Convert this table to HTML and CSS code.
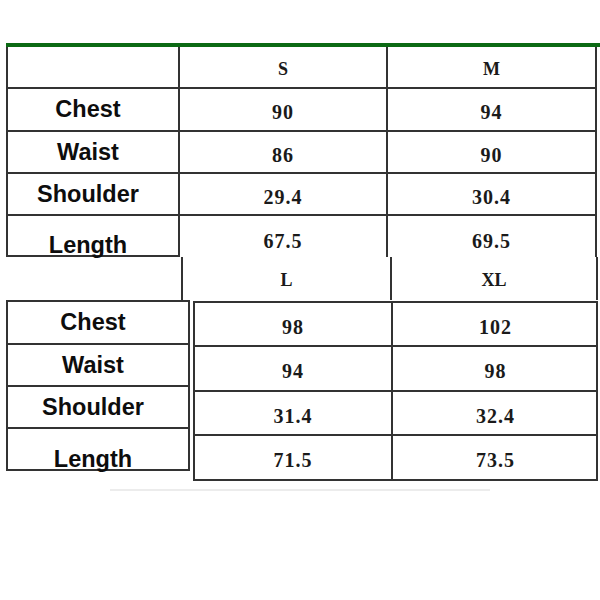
FILE: index.html
```html
<!DOCTYPE html>
<html>
<head>
<meta charset="utf-8">
<link rel="stylesheet" href="styles.css">
</head>
<body>
<div class="sheet">
  <div class="green"></div>
  <div class="grid-top">
    <div class="cell lab first"></div>
    <div class="cell val hd">S</div>
    <div class="cell val hd">M</div>

    <div class="cell lab first">Chest</div>
    <div class="cell val">90</div>
    <div class="cell val">94</div>

    <div class="cell lab first">Waist</div>
    <div class="cell val">86</div>
    <div class="cell val">90</div>

    <div class="cell lab first">Shoulder</div>
    <div class="cell val">29.4</div>
    <div class="cell val">30.4</div>

    <div class="cell lab first last low">Length</div>
    <div class="cell val nob low2">67.5</div>
    <div class="cell val nob low2">69.5</div>
  </div>

  <div class="head-bottom">
    <div class="hcell blank"></div>
    <div class="hcell val hd">L</div>
    <div class="hcell val hd">XL</div>
  </div>

  <div class="body-bottom">
    <div class="labels">
      <div class="lrow lab">Chest</div>
      <div class="lrow lab">Waist</div>
      <div class="lrow lab">Shoulder</div>
      <div class="lrow lab low">Length</div>
    </div>
    <div class="values">
      <div class="vcell val">98</div>
      <div class="vcell val">102</div>
      <div class="vcell val">94</div>
      <div class="vcell val">98</div>
      <div class="vcell val">31.4</div>
      <div class="vcell val">32.4</div>
      <div class="vcell val">71.5</div>
      <div class="vcell val">73.5</div>
    </div>
  </div>
  <div class="faint"></div>
</div>
</body>
</html>
```
FILE: styles.css
```css
html, body {
  margin: 0;
  padding: 0;
  background: #ffffff;
}

.sheet {
  width: 600px;
  height: 600px;
  padding-top: 43px;
  box-sizing: border-box;
}

.green {
  margin-left: 6px;
  width: 594px;
  height: 4px;
  background: #0c6a14;
}

.grid-top {
  margin-left: 6px;
  display: grid;
  grid-template-columns: 174px 208px 209px;
  grid-template-rows: 42px 43px 42px 42px 41px;
}

.cell {
  box-sizing: border-box;
  border-right: 2px solid #333;
  border-bottom: 2px solid #333;
  display: flex;
  align-items: center;
  justify-content: center;
}

.cell.first {
  border-left: 2px solid #333;
}

.cell.nob {
  border-bottom: none;
}

.cell.last {
  border-bottom: 2px solid #333;
}

.lab {
  font-family: "Liberation Sans", Arial, sans-serif;
  font-weight: bold;
  font-size: 23.5px;
  color: #0d0d0d;
  padding-right: 10px;
}

.lab.low {
  padding-top: 20px;
}

.val {
  font-family: "Liberation Serif", "Times New Roman", serif;
  font-weight: bold;
  font-size: 20px;
  color: #1a1a1a;
  letter-spacing: 1px;
  padding-top: 6px;
}

.val.low2 {
  padding-top: 10px;
}

.val.hd {
  font-size: 18px;
  letter-spacing: 0;
  padding-top: 4px;
}

/* bottom section */
.head-bottom {
  margin-left: 6px;
  display: grid;
  grid-template-columns: 177px 209px 206px;
  height: 43px;
}

.hcell {
  box-sizing: border-box;
  border-right: 2px solid #333;
  display: flex;
  align-items: center;
  justify-content: center;
}

.body-bottom {
  margin-left: 6px;
  display: flex;
  gap: 3px;
  align-items: flex-start;
}

.labels {
  width: 184px;
  box-sizing: border-box;
  border-left: 2px solid #333;
  border-right: 2px solid #333;
  border-top: 2px solid #333;
  display: flex;
  flex-direction: column;
}

.lrow {
  box-sizing: border-box;
  height: 42px;
  border-bottom: 2px solid #333;
  display: flex;
  align-items: center;
  justify-content: center;
}

.lrow:first-child {
  height: 43px;
}

.values {
  margin-top: 1px;
  width: 405px;
  box-sizing: border-box;
  border-left: 2px solid #333;
  border-right: 2px solid #333;
  border-top: 2px solid #333;
  display: grid;
  grid-template-columns: 198px 205px;
  grid-template-rows: 44px 45px 44px 45px;
}

.vcell {
  box-sizing: border-box;
  border-bottom: 2px solid #333;
  display: flex;
  align-items: center;
  justify-content: center;
}

.vcell:nth-child(odd) {
  border-right: 2px solid #333;
}

.faint {
  margin: 8px 0 0 110px;
  width: 380px;
  height: 2px;
  background: #ececec;
}
```
